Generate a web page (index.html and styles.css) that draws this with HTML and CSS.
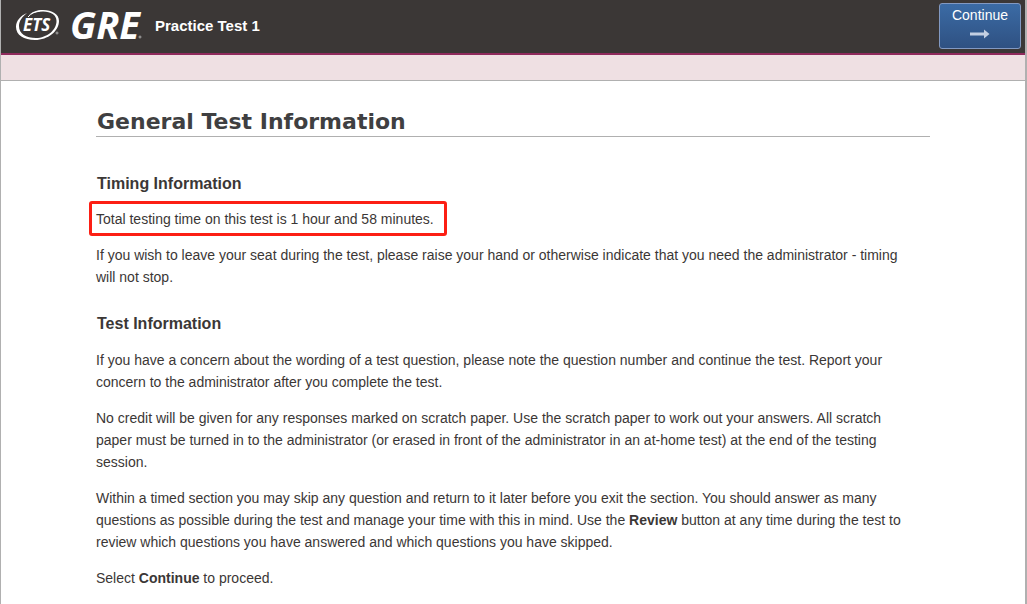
FILE: index.html
```html
<!DOCTYPE html>
<html lang="en">
<head>
<meta charset="utf-8">
<title>Practice Test 1</title>
<link rel="stylesheet" href="styles.css">
</head>
<body>
<div class="page">
  <header class="topbar">
    <svg class="logo" width="128" height="40" viewBox="0 0 128 40" role="img" aria-label="ETS GRE">
      <path fill="#fff" fill-rule="evenodd" d="M12 7C5 10 1 15 1 21C1 29 9 34 20 34C33 34 44 25 44 15C44 8 37 4 28 4C22 4 17 6 14 9C18 7 23 5.500 28 5.500C36 5.500 41.500 9 41.500 15C41.500 24 32 32 21 32C11 32 4 28 4 20C4 15 7 11 12 7Z"/>
      <path d="M13 11C16 7.500 20 5.500 25 5" fill="none" stroke="#fff"/>
      <text class="logo-ets" x="8" y="25">ETS</text>
      <text class="logo-gre" x="55" y="33">GRE</text>
      <circle cx="42" cy="27" r="1" fill="none" stroke="#aaa"/>
      <circle cx="125" cy="31" r="1" fill="none" stroke="#aaa"/>
    </svg>
    <span class="test-name">Practice Test 1</span>
    <button class="continue" type="button">
      <span>Continue</span>
      <svg width="20" height="10" viewBox="0 0 20 10" aria-hidden="true"><path d="M0 3.500H14V0.500L19.500 5L14 9.500V6.500H0Z" fill="#c3cfe2"/></svg>
    </button>
  </header>
  <div class="strip"></div>
  <main class="content">
    <h1>General Test Information</h1>
    <h2>Timing Information</h2>
    <p class="highlight">Total testing time on this test is 1 hour and 58 minutes.</p>
    <p>If you wish to leave your seat during the test, please raise your hand or otherwise indicate that you need the administrator - timing will not stop.</p>
    <h2>Test Information</h2>
    <p>If you have a concern about the wording of a test question, please note the question number and continue the test. Report your concern to the administrator after you complete the test.</p>
    <p>No credit will be given for any responses marked on scratch paper. Use the scratch paper to work out your answers. All scratch paper must be turned in to the administrator (or erased in front of the administrator in an at-home test) at the end of the testing session.</p>
    <p>Within a timed section you may skip any question and return to it later before you exit the section. You should answer as many questions as possible during the test and manage your time with this in mind. Use the <b>Review</b> button at any time during the test to review which questions you have answered and which questions you have skipped.</p>
    <p>Select <b>Continue</b> to proceed.</p>
  </main>
</div>
</body>
</html>
```
FILE: styles.css
```css
* { box-sizing: border-box; }
body {
  margin: 0;
  background: #fff;
  color: #3b3736;
  font: 14px/22px "Liberation Sans", Arial, sans-serif;
}
.page {
  min-height: 100vh;
  border-left: 1px solid #b0b0b0;
  border-right: 2px solid #b0b0b0;
}
.topbar {
  display: flex;
  align-items: flex-start;
  height: 55px;
  padding: 3px 4px 0 14px;
  background: #3b3736;
  border-bottom: 2px solid #8f2a5c;
}
.logo { margin-top: 3px; overflow: visible; }
.logo text {
  fill: #fff;
  font-family: "Open Sans", sans-serif;
  font-style: italic;
  font-weight: 700;
}
.logo .logo-ets { font-size: 17px; }
.logo .logo-gre { font-size: 38px; }
.test-name {
  margin: 12px 0 0 12px;
  color: #fff;
  font-size: 15px;
  font-weight: 700;
}
.continue {
  display: flex;
  flex-direction: column;
  align-items: center;
  gap: 5px;
  width: 82px;
  height: 46px;
  margin-left: auto;
  padding: 2px 0 0;
  border: 1px solid #8299c2;
  border-radius: 3px;
  background: linear-gradient(#3b6ba5, #2f5182);
  color: #fff;
  font: 14px/18px "Liberation Sans", Arial, sans-serif;
}
.strip {
  height: 26px;
  background: #efe0e3;
  border-bottom: 1px solid #b0b0b0;
}
.content { padding: 28px 95px 16px; }
h1 {
  margin: 0 0 36px;
  padding: 0 1px 1px;
  border-bottom: 1px solid #b0b0b0;
  color: #3f3f41;
  font: 900 22px/26px "Arial Black", "DejaVu Sans", sans-serif;
}
h2 {
  margin: 25px 1px 14px;
  font-size: 16px;
  line-height: 22px;
}
p {
  margin: 0 0 14px;
  padding-right: 22px;
}
.highlight {
  width: fit-content;
  margin: -8px -7px 8px;
  padding: 4px 10px 3px 4px;
  border: 3px solid #fc1f14;
  border-radius: 3px;
}
```
